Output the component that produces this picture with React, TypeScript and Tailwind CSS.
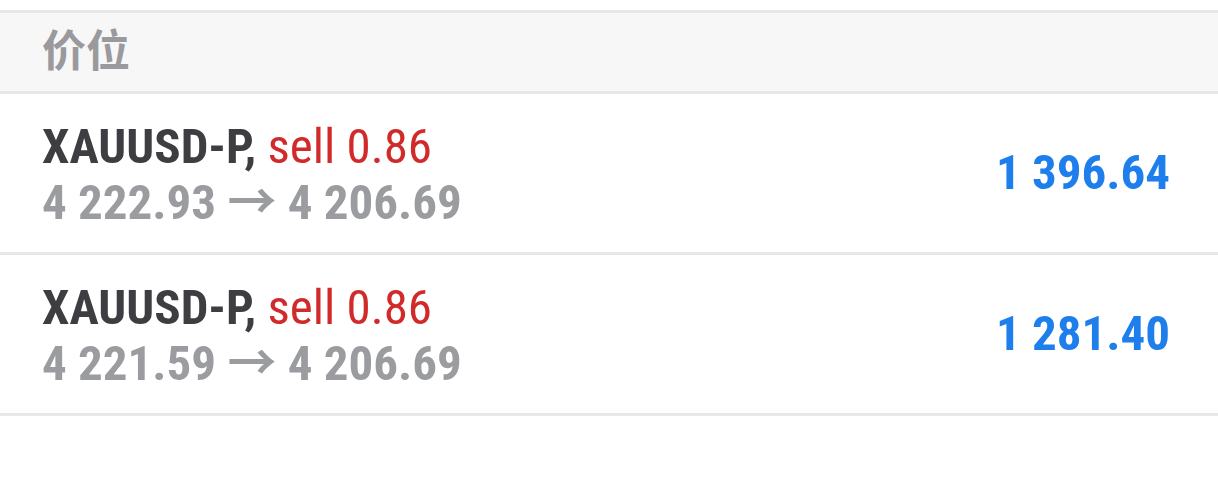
import React from 'react';

const positions = [
  { symbol: 'XAUUSD-P,', side: 'sell 0.86', open: '4 222.93', current: '4 206.69', profit: '1 396.64' },
  { symbol: 'XAUUSD-P,', side: 'sell 0.86', open: '4 221.59', current: '4 206.69', profit: '1 281.40' },
];

export default function App() {
  return (
    <div className="w-[1218px] h-[486px] bg-white overflow-hidden" style={{ fontFamily: '"Roboto Condensed", "Noto Sans CJK SC", sans-serif' }}>
      <div className="h-[10px]" />
      {/* section header */}
      <div className="h-[84px] bg-[#f7f7f7] border-y-[3px] border-[#e8e8e8] flex items-center px-[42px]">
        <span className="text-[44px] font-bold text-[#9a9a9e]">价位</span>
      </div>
      {positions.map((p, i) => (
        <div key={i} className="h-[161px] border-b-[3px] border-[#e8e8e8] flex items-center justify-between pl-[42px] pr-[48px]">
          <div className="flex flex-col leading-[56px] text-[49px] pt-[4px]">
            <div>
              <span className="font-bold text-[#3d3d42]">{p.symbol}</span>{' '}
              <span className="text-[#d12a2a]">{p.side}</span>
            </div>
            <div className="font-bold text-[#9b9ca0]">
              {p.open} → {p.current}
            </div>
          </div>
          <div className="text-[49px] font-bold text-[#1e7fec]">{p.profit}</div>
        </div>
      ))}
    </div>
  );
}
